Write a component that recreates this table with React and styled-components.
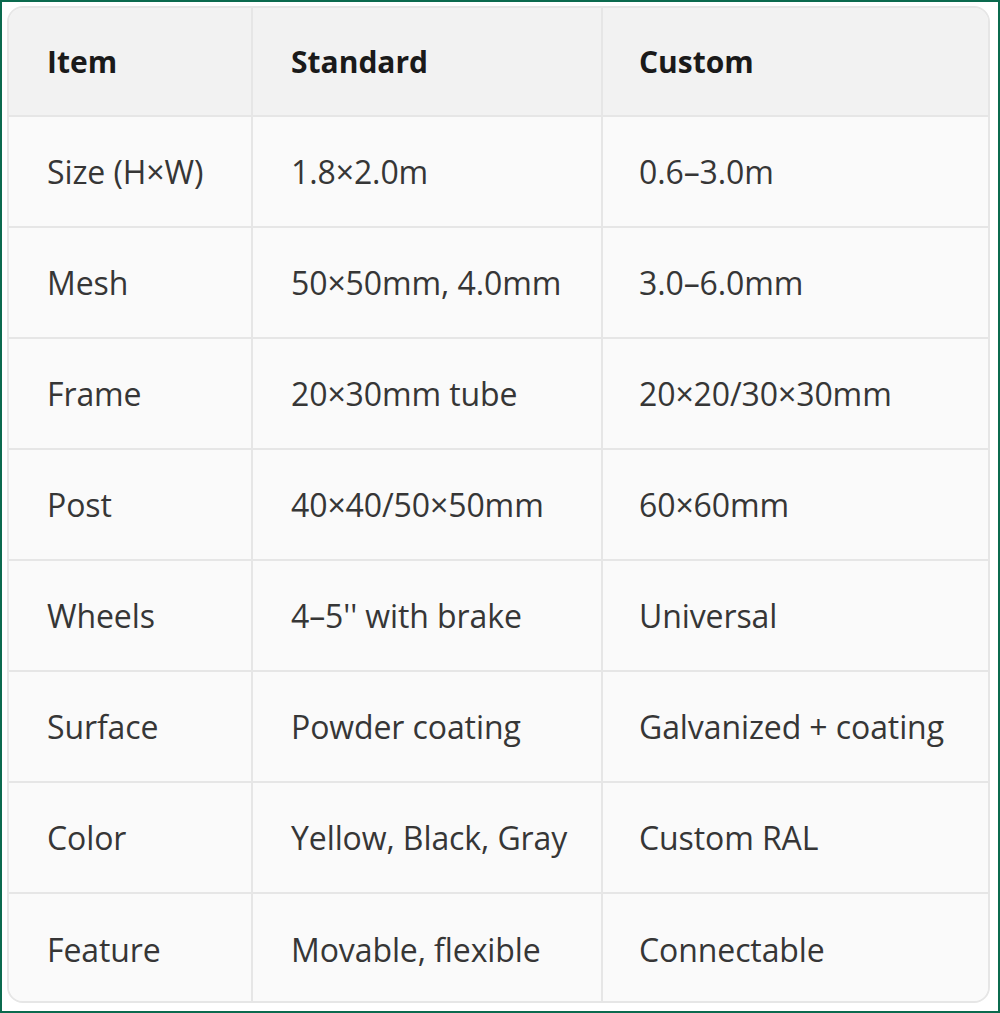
import React from "react";
import styled, { createGlobalStyle } from "styled-components";

const Global = createGlobalStyle`
  html, body { margin: 0; padding: 0; background: #ffffff; }
  * { box-sizing: border-box; }
`;

const Frame = styled.div`
  width: 1000px;
  height: 1013px;
  border: 2px solid #0b6a4e;
  background: #ffffff;
  padding: 4px 8px 8px 5px;
`;

const Table = styled.div`
  display: grid;
  grid-template-columns: 244px 350px 1fr;
  grid-template-rows: 109px repeat(8, 111px);
  height: 100%;
  border: 2px solid #e6e6e6;
  border-radius: 16px;
  overflow: hidden;
  background: #fafafa;
  font-family: "Open Sans", "Noto Sans", sans-serif;
`;

const Cell = styled.div`
  display: flex;
  align-items: center;
  padding-left: ${(p) => (p.$col === 2 ? 36 : 38)}px;
  font-size: ${(p) => (p.$head ? 30 : 32)}px;
  letter-spacing: ${(p) => (p.$head ? "0" : "-0.1px")};
  color: ${(p) => (p.$head ? "#1a1a1a" : "#363636")};
  font-weight: ${(p) => (p.$head ? 700 : 400)};
  background: ${(p) => (p.$head ? "#f2f2f2" : "#fafafa")};
  border-right: ${(p) => (p.$col < 2 ? "2px solid #e6e6e6" : "none")};
  border-bottom: ${(p) => (p.$last ? "none" : "2px solid #e6e6e6")};
  white-space: nowrap;
`;

const header = ["Item", "Standard", "Custom"];
const rows = [
  ["Size (H×W)", "1.8×2.0m", "0.6–3.0m"],
  ["Mesh", "50×50mm, 4.0mm", "3.0–6.0mm"],
  ["Frame", "20×30mm tube", "20×20/30×30mm"],
  ["Post", "40×40/50×50mm", "60×60mm"],
  ["Wheels", "4–5'' with brake", "Universal"],
  ["Surface", "Powder coating", "Galvanized + coating"],
  ["Color", "Yellow, Black, Gray", "Custom RAL"],
  ["Feature", "Movable, flexible", "Connectable"],
];

export default function App() {
  return (
    <>
      <Global />
      <Frame>
        <Table>
          {header.map((h, i) => (
            <Cell key={h} $head $col={i}>
              {h}
            </Cell>
          ))}
          {rows.map((r, ri) =>
            r.map((c, ci) => (
              <Cell key={ri + "-" + ci} $col={ci} $last={ri === rows.length - 1}>
                {c}
              </Cell>
            ))
          )}
        </Table>
      </Frame>
    </>
  );
}
